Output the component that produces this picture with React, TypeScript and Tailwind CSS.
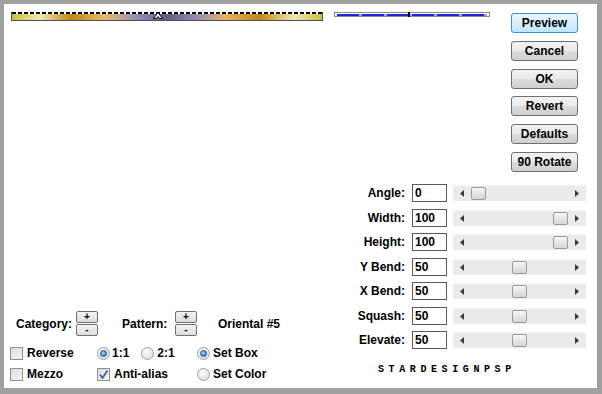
import React from 'react';

const buttons = ['Preview', 'Cancel', 'OK', 'Revert', 'Defaults', '90 Rotate'];

const sliders = [
  { label: 'Angle:', value: '0', thumb: 18 },
  { label: 'Width:', value: '100', thumb: 100 },
  { label: 'Height:', value: '100', thumb: 100 },
  { label: 'Y Bend:', value: '50', thumb: 59 },
  { label: 'X Bend:', value: '50', thumb: 59 },
  { label: 'Squash:', value: '50', thumb: 59 },
  { label: 'Elevate:', value: '50', thumb: 59 },
];

function Checkbox({ checked = false }: { checked?: boolean }) {
  return (
    <div className="w-[13px] h-[13px] border border-[#8e8f8f] bg-[linear-gradient(135deg,#dcdcdc,#f6f6f6)] flex items-center justify-center">
      {checked && (
        <svg width="11" height="11" viewBox="0 0 11 11">
          <path d="M2 5.5 L4.5 9 L9.5 1.5" stroke="#3d5ea8" strokeWidth="1.8" fill="none" />
        </svg>
      )}
    </div>
  );
}

function Radio({ checked = false }: { checked?: boolean }) {
  return (
    <div className="w-[13px] h-[13px] rounded-full border border-[#a0a0a0] bg-[radial-gradient(circle_at_40%_35%,#ffffff,#d4d4d4)] flex items-center justify-center">
      {checked && (
        <div className="w-[7px] h-[7px] rounded-full border border-[#1c4d7a] bg-[radial-gradient(circle_at_40%_35%,#8fd0ff,#1f78c8)]" />
      )}
    </div>
  );
}

function PlusMinus() {
  return (
    <div className="flex flex-col gap-[1px]">
      <div className="w-[22px] h-[12px] border border-[#707070] rounded-[2px] bg-[linear-gradient(#f4f4f4,#dcdcdc)] flex items-center justify-center text-[10px] leading-none font-bold">
        +
      </div>
      <div className="w-[22px] h-[12px] border border-[#707070] rounded-[2px] bg-[linear-gradient(#f4f4f4,#dcdcdc)] flex items-center justify-center text-[10px] leading-none font-bold">
        -
      </div>
    </div>
  );
}

function Track({ thumb }: { thumb: number }) {
  return (
    <div className="relative w-[133px] h-[16px] bg-[#ebebeb] border-t border-[#f6f6f6] flex items-center justify-between px-[7px]">
      <svg width="4" height="7" viewBox="0 0 4 7">
        <path d="M4 0 L0 3.5 L4 7Z" fill="#3a3a3a" />
      </svg>
      <svg width="4" height="7" viewBox="0 0 4 7">
        <path d="M0 0 L4 3.5 L0 7Z" fill="#3a3a3a" />
      </svg>
      <div
        className="absolute top-[1px] w-[15px] h-[13px] rounded-[2px] border border-[#9a9a9a] bg-[linear-gradient(#f7f7f7,#d6d6d6)]"
        style={{ left: thumb }}
      />
    </div>
  );
}

export default function App() {
  return (
    <div className="w-[602px] h-[394px] bg-[#a0a0a0] pt-[4px] pl-[4px] pr-[5px] pb-[6px] font-['Liberation_Sans',Arial,sans-serif] text-black">
      <div className="h-full bg-white flex flex-col">
        {/* Top: gradient bars and buttons */}
        <div className="flex h-[176px]">
          <div className="flex-1 flex items-start pt-[8px] pl-[7px]">
            <div className="relative w-[312px] h-[9px] border-x border-b border-[#505050] bg-[linear-gradient(to_right,#c8c040_0%,#f0e8b4_9%,#c08818_19%,#e8b868_30%,#9890b8_40%,#5e5e86_50%,#9890b8_60%,#e8b060_69%,#c08818_80%,#f0e8b4_91%,#c8c040_100%)]">
              <div className="absolute left-0 right-0 top-0 h-[2px] bg-[repeating-linear-gradient(to_right,#000_0px,#000_4px,#fff_4px,#fff_6px)]" />
              <svg className="absolute left-[141px] top-[0px]" width="10" height="7" viewBox="0 0 10 7">
                <path d="M5 0.5 L9.5 6.5 L6.5 6.5 L5 4.5 L3.5 6.5 L0.5 6.5Z" fill="#fff" stroke="#000" strokeWidth="1" />
              </svg>
            </div>
            <div className="relative ml-[11px] w-[156px] h-[5px] border border-[#8a8a8a] flex items-center px-[2px]">
              <div className="w-full h-[2px] bg-[repeating-linear-gradient(to_right,#2222d8_0px,#2222d8_22px,#9a9ae8_22px,#9a9ae8_25px)]" />
              <div className="absolute left-[73px] top-[-1px] w-[2px] h-[5px] bg-black" />
            </div>
          </div>
          <div className="flex flex-col gap-[7.8px] pt-[9px] pr-[19px]">
            {buttons.map((b, i) => (
              <div
                key={b}
                className={
                  i === 0
                    ? 'w-[67px] h-[20px] rounded-[3px] border border-[#3c8fd0] bg-[linear-gradient(#eaf6fd,#d9f0fc_50%,#bee6fd)] flex items-center justify-center text-[12px] font-bold'
                    : 'w-[67px] h-[20px] rounded-[3px] border border-[#707070] bg-[linear-gradient(#f2f2f2,#ebebeb_50%,#dddddd_51%,#cfcfcf)] flex items-center justify-center text-[12px] font-bold'
                }
              >
                {b}
              </div>
            ))}
          </div>
        </div>

        {/* Bottom: options and sliders */}
        <div className="flex flex-1">
          <div className="flex flex-col justify-end pl-[6px] pb-[7px] text-[12px] font-bold">
            <div className="flex items-center h-[25px] pl-[6px]">
              <span className="w-[60px]">Category:</span>
              <PlusMinus />
              <span className="w-[53px] ml-[24px]">Pattern:</span>
              <PlusMinus />
              <span className="ml-[21px]">Oriental #5</span>
            </div>
            <div className="grid grid-cols-[87px_100px_auto] items-center h-[16px] mt-[8px]">
              <div className="flex items-center gap-[4px]">
                <Checkbox />
                <span>Reverse</span>
              </div>
              <div className="flex items-center">
                <Radio checked />
                <span className="ml-[2px]">1:1</span>
                <span className="ml-[12px]">
                  <Radio />
                </span>
                <span className="ml-[3px]">2:1</span>
              </div>
              <div className="flex items-center gap-[3px]">
                <Radio checked />
                <span>Set Box</span>
              </div>
            </div>
            <div className="grid grid-cols-[87px_100px_auto] items-center h-[16px] mt-[5px]">
              <div className="flex items-center gap-[4px]">
                <Checkbox />
                <span>Mezzo</span>
              </div>
              <div className="flex items-center gap-[4px]">
                <Checkbox checked />
                <span>Anti-alias</span>
              </div>
              <div className="flex items-center gap-[3px]">
                <Radio />
                <span>Set Color</span>
              </div>
            </div>
          </div>

          <div className="ml-auto pr-[11px] pt-[4px] flex flex-col">
            <div className="flex flex-col gap-[6.5px]">
              {sliders.map((s) => (
                <div key={s.label} className="flex items-center h-[18px]">
                  <span className="w-[60px] text-right text-[12px] font-bold">{s.label}</span>
                  <div className="ml-[7px] w-[35px] h-[18px] border border-[#5a5a5a] pl-[2px] text-[12px] font-bold leading-[16px]">
                    {s.value}
                  </div>
                  <div className="ml-[6px]">
                    <Track thumb={s.thumb} />
                  </div>
                </div>
              ))}
            </div>
            <div className="mt-[16px] ml-[33px] font-['Liberation_Mono',monospace] text-[10px] font-bold tracking-[4.6px] leading-none text-black">
              STARDESIGNPSP
            </div>
          </div>
        </div>
      </div>
    </div>
  );
}
